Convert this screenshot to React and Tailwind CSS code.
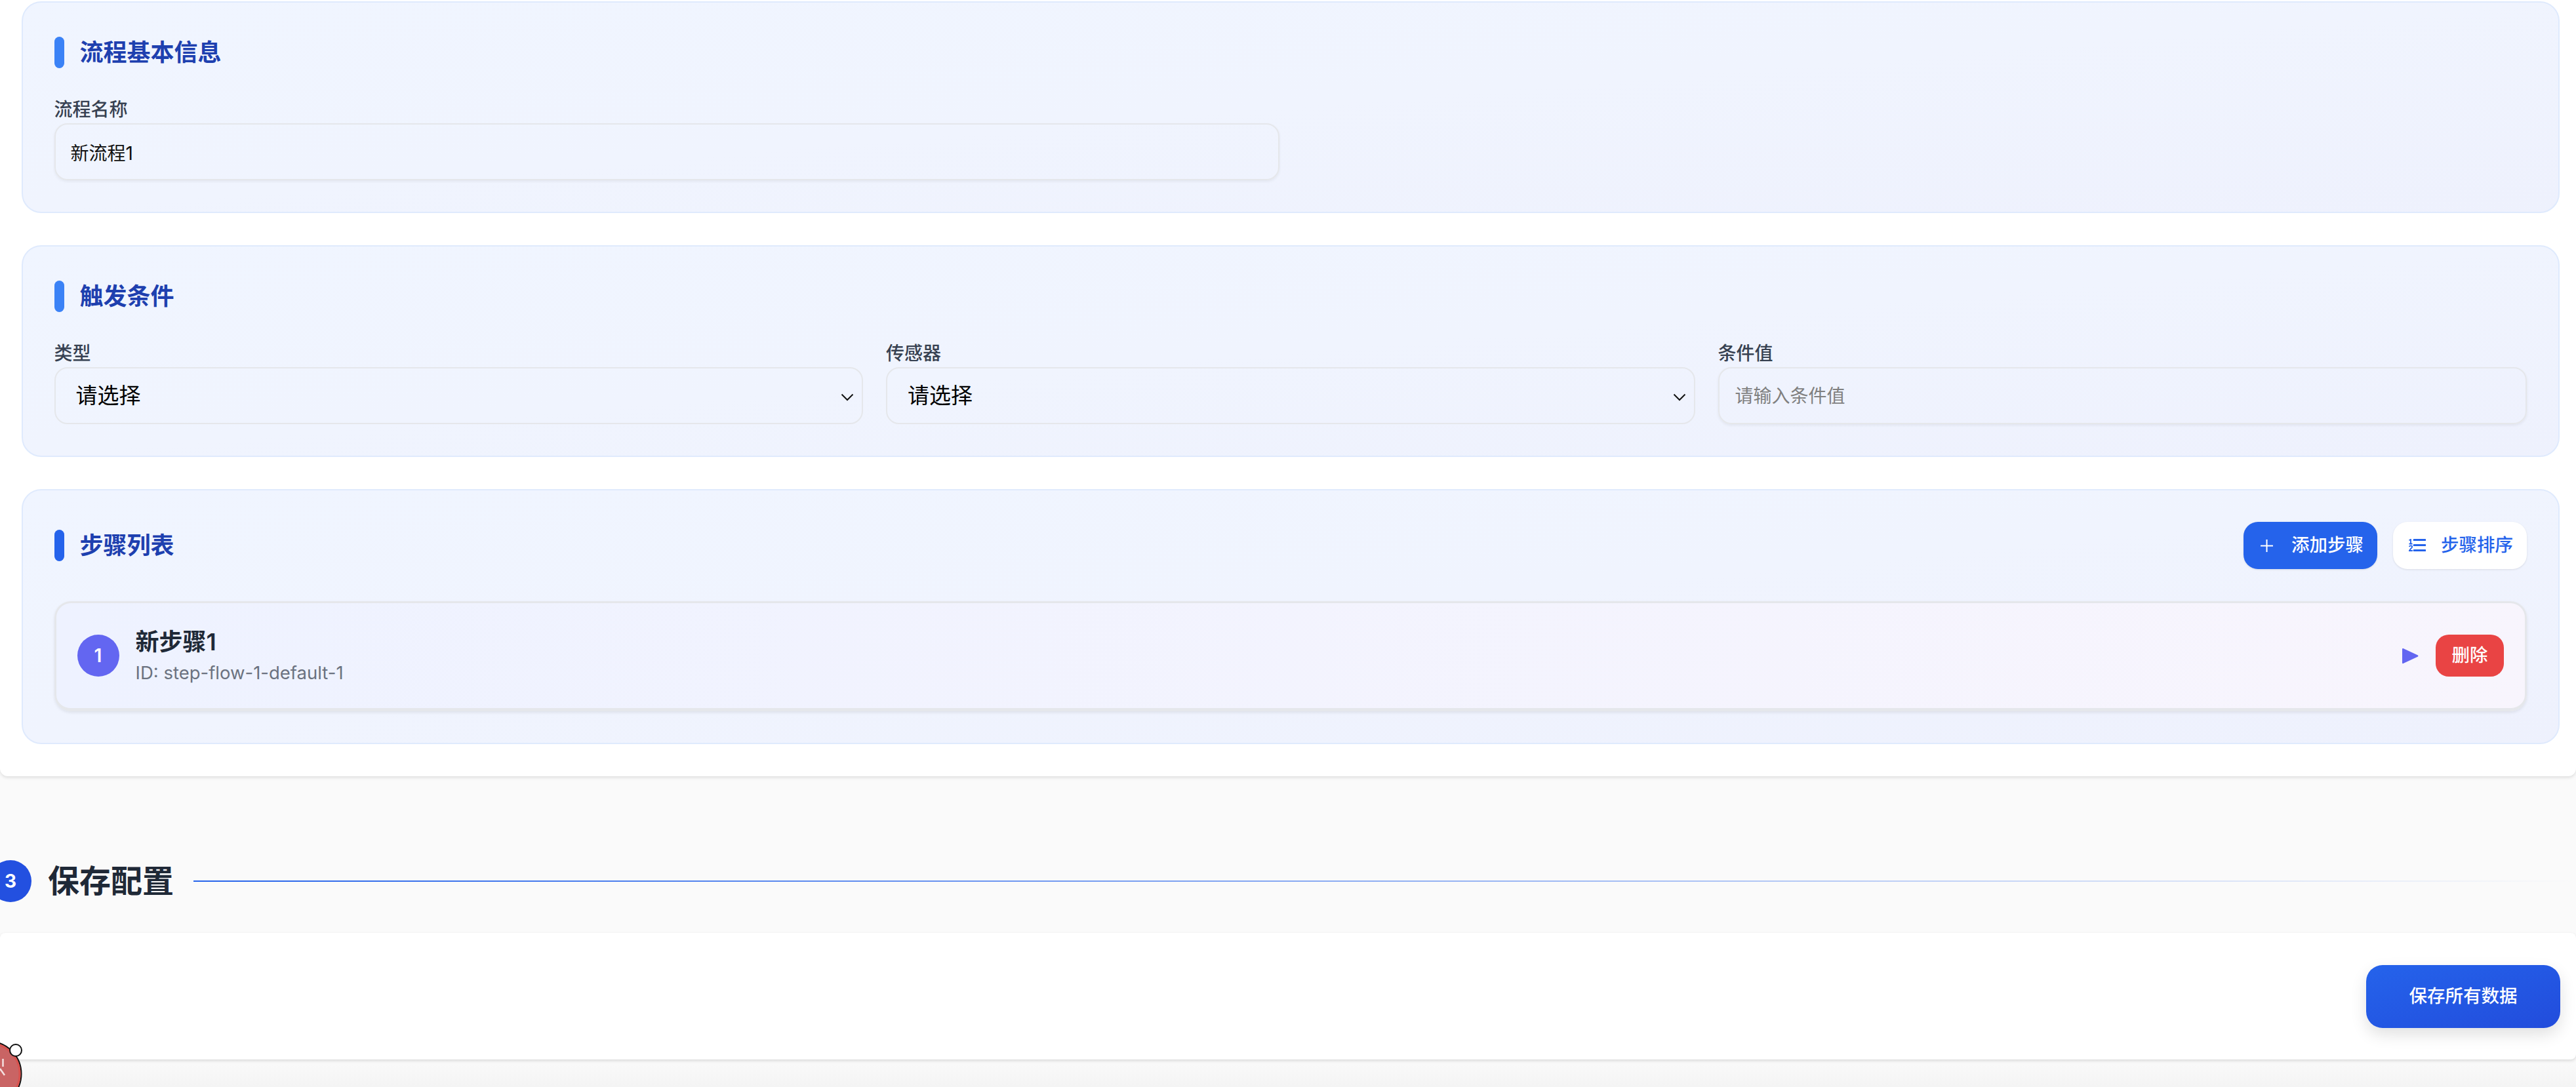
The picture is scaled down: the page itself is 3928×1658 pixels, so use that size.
import { AiOutlinePlus } from 'react-icons/ai';

function SectionTitle({ children, barClass = 'bg-[#3b82f6]' }) {
  return (
    <div className="flex h-[48px] items-center gap-[24px]">
      <span className={`h-[48px] w-[15px] rounded-full ${barClass}`} />
      <h3 className="text-[36px] leading-[48px] font-semibold text-[#1e40af]">{children}</h3>
    </div>
  );
}

function Panel({ children, className = '' }) {
  return (
    <section className={`rounded-[30px] border-2 border-[#dfeafd] bg-gradient-to-br from-[#f0f5ff] via-[#f0f4fe] to-[#eef1fd] pr-[48px] pl-[47.5px] ${className}`}>
      {children}
    </section>
  );
}

function Label({ children }) {
  return <label className="block text-[28px] leading-[42px] font-medium text-[#374151]">{children}</label>;
}

function SelectField({ label }) {
  return (
    <div>
      <Label>{label}</Label>
      <div className="relative">
        <select className="h-[87px] w-full appearance-none rounded-[20px] border-2 border-[#e5e7eb] bg-transparent pl-[31px] text-[33px] text-black outline-none">
          <option>请选择</option>
        </select>
        <svg className="absolute top-[40px] right-[14px]" width="20" height="12" viewBox="0 0 20 12" fill="none" stroke="#111" strokeWidth="2">
          <path d="M1.5 1.5 L10 10 L18.5 1.5" />
        </svg>
      </div>
    </div>
  );
}

function SortIcon() {
  return (
    <svg width="26" height="20" viewBox="0 0 26 20" fill="none" stroke="#2563eb">
      <path d="M8 1.5 H25 M8 9.5 H25 M8 17.5 H25" strokeWidth="3" strokeLinecap="round" />
      <path d="M0.5 2.2 L3 0.8 V7.5 M0.5 7.5 H5.5" strokeWidth="1.8" />
      <path d="M0.5 11.8 Q2.8 9.4 5 11.2 Q5.8 13 3 15 L0.8 18 H5.8" strokeWidth="1.8" />
    </svg>
  );
}

function ClockBadge() {
  return (
    <svg className="absolute bottom-0 left-0 z-20" width="46" height="78" viewBox="0 0 46 78" fill="none">
      <circle cx="-17" cy="58" r="49.5" fill="#c96464" stroke="#111" strokeWidth="2" />
      <circle cx="-17" cy="58" r="47" stroke="#d9534f" strokeWidth="3" />
      <path d="M4.5 35 V47" stroke="#fff" strokeOpacity="0.8" strokeWidth="2.5" />
      <path d="M0 50 L7 60" stroke="#fff" strokeOpacity="0.8" strokeWidth="2.5" />
      <circle cx="24" cy="22" r="9" fill="#fff" stroke="#111" strokeWidth="2" />
    </svg>
  );
}

export default function App() {
  return (
    <div className="relative h-[1658px] w-full overflow-hidden bg-[#fafafa] [font-family:Inter,'Noto_Sans_CJK_SC',sans-serif]">
      <div className="flex flex-col gap-[49px] rounded-b-[12px] bg-white pt-[2px] pr-[25px] pb-[49px] pl-[33px] shadow-[0_2px_5px_rgba(0,0,0,0.12)]">
        <Panel className="h-[323px] pt-[52px]">
          <SectionTitle>流程基本信息</SectionTitle>
          <div className="mt-[42px] w-[1868px]">
            <Label>流程名称</Label>
            <input
              defaultValue="新流程1"
              className="h-[87px] w-full rounded-[20px] border-2 border-[#e5e7eb] bg-transparent px-[23px] text-[28px] text-[#111] shadow-[0_2px_4px_rgba(0,0,0,0.06)] outline-none"
            />
          </div>
        </Panel>

        <Panel className="h-[323px] pt-[52px]">
          <SectionTitle>触发条件</SectionTitle>
          <div className="mt-[42px] grid grid-cols-3 gap-[35px]">
            <SelectField label="类型" />
            <SelectField label="传感器" />
            <div>
              <Label>条件值</Label>
              <input
                placeholder="请输入条件值"
                className="h-[87px] w-full rounded-[20px] border-2 border-[#e5e7eb] bg-transparent px-[24px] text-[28px] shadow-[0_2px_4px_rgba(0,0,0,0.06)] outline-none placeholder:text-[#808080]"
              />
            </div>
          </div>
        </Panel>

        <Panel className="h-[389px] pt-[48px]">
          <div className="flex h-[72px] items-center justify-between">
            <SectionTitle barClass="bg-[#2563eb]">步骤列表</SectionTitle>
            <div className="flex gap-[24px]">
              <button className="flex h-[72px] w-[204px] items-center gap-[24px] rounded-[22px] bg-[#2563eb] pl-[22px] text-[27.5px] font-medium text-white shadow-[0_1px_3px_rgba(0,0,0,0.1)]">
                <AiOutlinePlus size={27} />
                添加步骤
              </button>
              <button className="flex h-[72px] w-[204px] items-center gap-[23px] rounded-[22px] bg-white pl-[24px] text-[27.5px] font-medium text-[#2563eb] shadow-[0_1px_3px_rgba(0,0,0,0.1)]">
                <SortIcon />
                步骤排序
              </button>
            </div>
          </div>

          <div className="mt-[49px] flex h-[168px] items-center justify-between rounded-[25px] border-[3px] border-b-[5px] border-[#e5e7eb] bg-gradient-to-r from-[#eef2ff] to-[#f8f5fd] px-[32px] shadow-[0_2px_4px_rgba(0,0,0,0.08)]">
            <div className="flex items-center gap-[25px]">
              <span className="flex h-[64px] w-[64px] items-center justify-center rounded-full bg-[#6366f1] text-[28px] font-semibold text-white">1</span>
              <div>
                <div className="text-[36px] leading-[50px] font-semibold text-[#1f2937]">新步骤1</div>
                <div className="mt-[2px] text-[27.5px] leading-[40px] text-[#6b7280]">ID: step-flow-1-default-1</div>
              </div>
            </div>
            <div className="flex items-center gap-[26px]">
              <svg width="25" height="25" viewBox="0 0 25 25">
                <path d="M1.5 1 L24 11.5 Q25 12.5 24 13.5 L1.5 24 Q0 24.5 0 23 V2 Q0 0.5 1.5 1 Z" fill="#6366f1" />
              </svg>
              <button className="h-[64px] w-[104px] rounded-[20px] bg-[#e94444] text-[27.5px] font-medium text-white">删除</button>
            </div>
          </div>
        </Panel>
      </div>

      <div className="flex items-center pt-[128px] pb-[47px]">
        <span className="-ml-[16px] flex h-[64px] w-[64px] shrink-0 items-center justify-center rounded-full bg-[#2350e0] text-[28px] font-bold text-white">3</span>
        <h2 className="ml-[25px] text-[48px] leading-[64px] font-semibold text-[#1f2937]">保存配置</h2>
        <div className="ml-[30px] h-[2px] flex-1 bg-gradient-to-r from-[#2563eb] to-transparent" />
      </div>

      <div className="relative z-10 flex h-[193px] items-start justify-end rounded-[8px] bg-white pt-[49px] pr-[24px] shadow-[0_2px_5px_rgba(0,0,0,0.14)]">
        <button className="h-[96px] w-[296px] rounded-[25px] bg-gradient-to-br from-[#2563eb] to-[#224cdc] text-[27.5px] font-medium text-white shadow-[0_10px_25px_rgba(0,0,0,0.12)]">
          保存所有数据
        </button>
      </div>

      <div className="h-[42px] bg-gradient-to-b from-[#fafafa] to-[#f4f4f4]" />

      <ClockBadge />
    </div>
  );
}
